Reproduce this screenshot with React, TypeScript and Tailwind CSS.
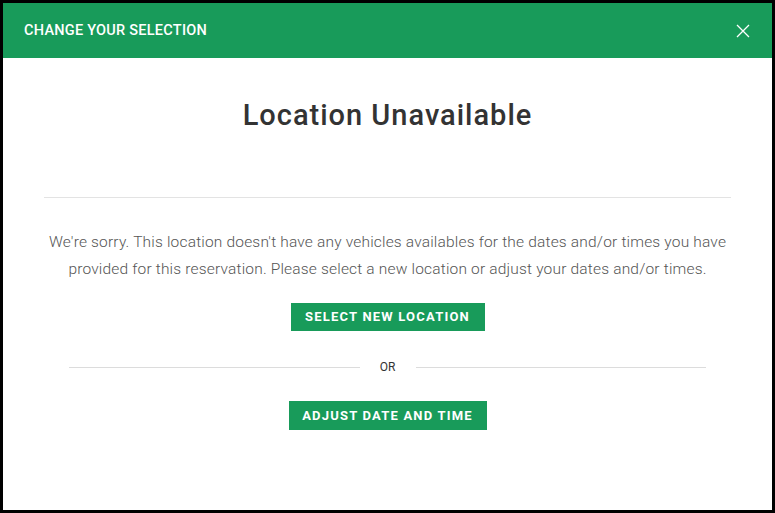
import React from "react";

export default function App() {
  return (
    <div
      className="w-[775px] h-[513px] bg-black pt-[3px] pl-[3px] pr-[3px] pb-[3px] flex flex-col"
      style={{ fontFamily: "Roboto, 'Noto Sans', sans-serif" }}
    >
      <div className="h-[55px] bg-[#189b5a] flex items-center justify-between pl-[21px] pr-[20px] shrink-0">
        <span className="text-white text-[14.5px] font-medium tracking-[0.25px]">CHANGE YOUR SELECTION</span>
        <svg width="14" height="14" viewBox="0 0 14 14" className="mr-[2px] mt-[1px]">
          <path d="M1 1 L13 13 M13 1 L1 13" stroke="white" strokeWidth="1.3" />
        </svg>
      </div>
      <div className="flex-1 bg-white flex flex-col items-center px-[41px]">
        <h1 className="text-[29px] font-medium text-[#333] mt-[39px] leading-[36px] tracking-[1px]">
          Location Unavailable
        </h1>
        <div className="w-full h-px bg-[#e3e3e3] mt-[64px]" />
        <p className="w-[690px] text-[15.5px] font-light text-[#555] text-center leading-[27px] mt-[31px] tracking-[0.18px]">
          We're sorry. This location doesn't have any vehicles availables for the dates and/or times you have provided
          for this reservation. Please select a new location or adjust your dates and/or times.
        </p>
        <button className="mt-[20px] h-[28px] w-[194px] bg-[#189b5a] text-white text-[13px] font-bold tracking-[1.2px]">
          SELECT NEW LOCATION
        </button>
        <div className="w-full px-[25px] flex items-center mt-[27px]">
          <div className="flex-1 h-px bg-[#dcdcdc]" />
          <span className="w-[56px] text-center text-[12px] text-[#333]">OR</span>
          <div className="flex-1 h-px bg-[#dcdcdc]" />
        </div>
        <button className="mt-[25px] h-[29px] w-[198px] bg-[#189b5a] text-white text-[13px] font-bold tracking-[1.2px]">
          ADJUST DATE AND TIME
        </button>
      </div>
    </div>
  );
}
